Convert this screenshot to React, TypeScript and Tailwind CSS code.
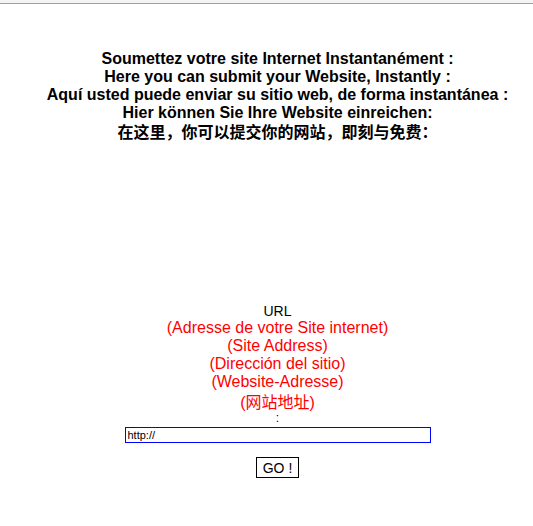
export default function App() {
  return (
    <div className="min-h-[526px] bg-white text-black" style={{ fontFamily: '"Liberation Sans", Arial, "Noto Sans CJK SC", sans-serif' }}>
      <div className="h-[4px] bg-[#f4f4f4] border-b border-[#a0a0a0]" />
      <div className="pl-[22px]">
        <div className="pt-[46px] text-center font-bold text-[16px] leading-[18px]">
          <div>Soumettez votre site Internet Instantanément :</div>
          <div>Here you can submit your Website, Instantly :</div>
          <div>Aquí usted puede enviar su sitio web, de forma instantánea :</div>
          <div>Hier können Sie Ihre Website einreichen:</div>
          <div className="mt-[2px]">在这里，你可以提交你的网站，即刻与免费：</div>
        </div>
        <div className="mt-[161px] flex flex-col items-center text-center">
          <div className="text-[14px] leading-[16px]">URL</div>
          <div className="text-[16px] leading-[18px] text-[#ff0000]">
            <div>(Adresse de votre Site internet)</div>
            <div>(Site Address)</div>
            <div>(Dirección del sitio)</div>
            <div>(Website-Adresse)</div>
            <div className="mt-[3px]">(网站地址)</div>
          </div>
          <div className="text-[12px] leading-[12px]">:</div>
          <input
            defaultValue="http://"
            className="mt-[3px] w-[306px] h-[16px] border border-[#0000ff] px-[2px] text-[11px] leading-[14px] outline-none"
          />
          <button className="mt-[14px] h-[21px] px-[6px] border border-black text-[14px] leading-[18px] bg-white">
            GO !
          </button>
        </div>
      </div>
    </div>
  );
}
